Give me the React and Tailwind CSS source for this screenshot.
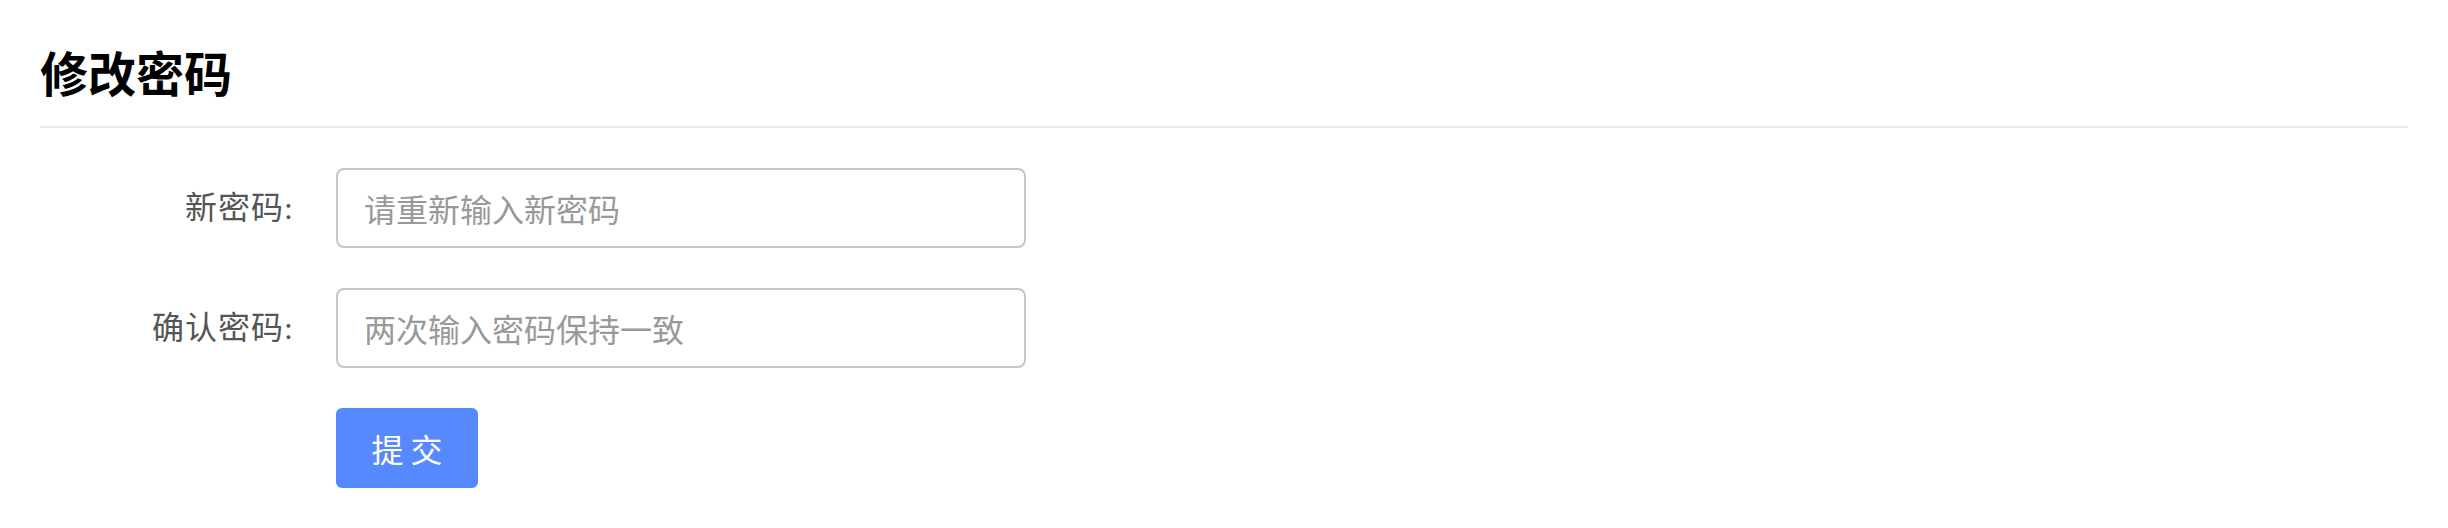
export default function App() {
  return (
    <div className="min-h-[528px] bg-white px-[40px] pt-[40px]" style={{ fontFamily: '"Liberation Serif", "Noto Sans CJK SC", serif' }}>
      <div className="border-b-2 border-[#ebebeb] pb-[14px]">
        <h2 className="text-[48px] leading-[72px] font-bold text-black">修改密码</h2>
      </div>

      <form className="mt-[40px] flex flex-col gap-[40px]" onSubmit={(e) => e.preventDefault()}>
        <div className="flex items-center">
          <label className="w-[296px] pr-[42px] text-right text-[32px] leading-[80px] text-[#555] tracking-[1px]">新密码:</label>
          <input
            type="password"
            placeholder="请重新输入新密码"
            className="h-[80px] w-[690px] rounded-[8px] border-2 border-[#c4c6cd] px-[26px] text-[32px] text-[#555] outline-none placeholder:text-[#999]"
            style={{ fontFamily: '"Noto Sans CJK SC", sans-serif' }}
          />
        </div>
        <div className="flex items-center">
          <label className="w-[296px] pr-[42px] text-right text-[32px] leading-[80px] text-[#555] tracking-[1px]">确认密码:</label>
          <input
            type="password"
            placeholder="两次输入密码保持一致"
            className="h-[80px] w-[690px] rounded-[8px] border-2 border-[#c4c6cd] px-[26px] text-[32px] text-[#555] outline-none placeholder:text-[#999]"
            style={{ fontFamily: '"Noto Sans CJK SC", sans-serif' }}
          />
        </div>
        <div className="flex">
          <div className="w-[296px]" />
          <button
            type="submit"
            className="h-[80px] w-[142px] rounded-[6px] bg-[#5689fd] text-[32px] text-white"
            style={{ fontFamily: '"Noto Sans CJK SC", sans-serif' }}
          >
            提 交
          </button>
        </div>
      </form>
    </div>
  );
}
